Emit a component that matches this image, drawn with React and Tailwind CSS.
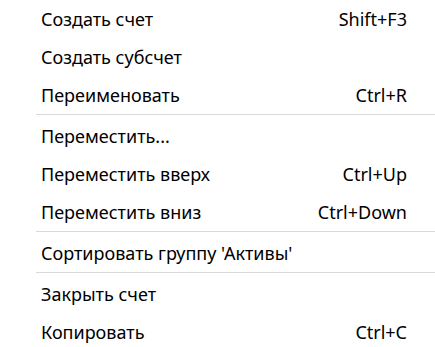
import React from 'react';

const items = [
  { label: 'Создать счет', shortcut: 'Shift+F3' },
  { label: 'Создать субсчет' },
  { label: 'Переименовать', shortcut: 'Ctrl+R' },
  { separator: true },
  { label: 'Переместить...' },
  { label: 'Переместить вверх', shortcut: 'Ctrl+Up' },
  { label: 'Переместить вниз', shortcut: 'Ctrl+Down' },
  { separator: true },
  { label: "Сортировать группу 'Активы'" },
  { separator: true },
  { label: 'Закрыть счет' },
  { label: 'Копировать', shortcut: 'Ctrl+C' },
];

const MenuItem = ({ label, shortcut }) => (
  <div className="flex h-[38px] items-center justify-between pl-[41px] pr-[28px] leading-none">
    <span>{label}</span>
    {shortcut && <span>{shortcut}</span>}
  </div>
);

export default function App() {
  return (
    <div
      className="h-[347px] w-[435px] overflow-hidden bg-white text-[18px] text-black"
      style={{ fontFamily: '"Noto Sans", "Open Sans", sans-serif' }}
    >
      {items.map((item, i) =>
        item.separator ? (
          <div key={i} className="ml-[36px] mb-[2px] h-px bg-[#d9d9d9]" />
        ) : (
          <MenuItem key={i} {...item} />
        )
      )}
    </div>
  );
}
